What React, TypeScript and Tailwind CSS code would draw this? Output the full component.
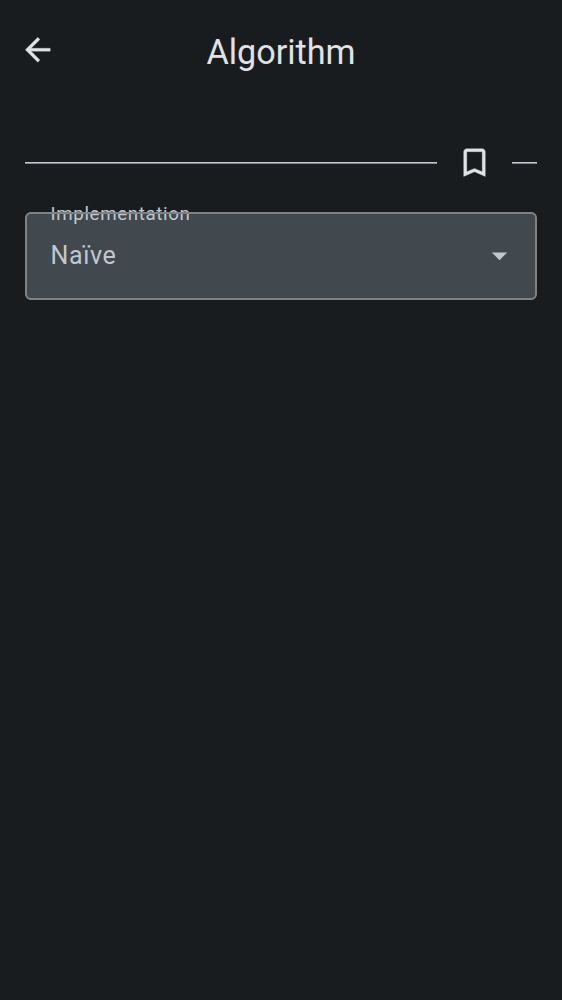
export default function App() {
  return (
    <main className="min-h-[1000px] bg-[#191c1e] px-[25px] font-['Roboto',sans-serif] text-[#e1e2e5]">
      <header className="grid h-[100px] grid-cols-[38px_1fr_38px] items-center">
        <button aria-label="Back" className="-ml-[6.5px]">
          <svg width="37.5" height="37.5" viewBox="0 0 24 24" fill="currentColor" stroke="currentColor" strokeWidth="0.15"><path d="M20 11H7.83l5.59-5.59L12 4l-8 8 8 8 1.41-1.41L7.83 13H20v-2z" /></svg>
        </button>
        <h1 className="pt-1 text-center text-[34.2px] leading-[44px]">Algorithm</h1>
      </header>
      <div className="flex h-[112px] items-center pt-[13px]">
        <div className="h-[2px] flex-1 border-t border-[#c1c7ce] bg-[#82878c]" />
        <svg className="mx-[19px]" width="37" height="37" viewBox="0 0 24 24" fill="currentColor" stroke="currentColor" strokeWidth="0.2"><path d="M17 3H7c-1.1 0-2 .9-2 2v16l7-3 7 3V5c0-1.1-.9-2-2-2zm0 15-5-2.18L7 18V5h10v13z" /></svg>
        <div className="h-[2px] w-[25px] border-t border-[#c1c7ce] bg-[#82878c]" />
      </div>
      <button className="relative flex h-[88px] w-full items-center justify-between rounded-[6px] bg-[#41484e] pr-[19px] pl-[25.5px] text-[#c1c7ce]">
        <span className="absolute top-[-10px] left-[25.5px] text-[18.75px] leading-6 tracking-[0.62px]">Implementation</span>
        <span className="text-[25px] leading-9 tracking-[0.6px]">Naïve</span>
        <svg className="-translate-y-px" width="37" height="37" viewBox="0 0 24 24" fill="currentColor"><path d="M7 10l5 5 5-5z" /></svg>
        <span className="pointer-events-none absolute inset-0 rounded-[6px] border-2 border-[#7b8288]" />
      </button>
    </main>
  );
}
